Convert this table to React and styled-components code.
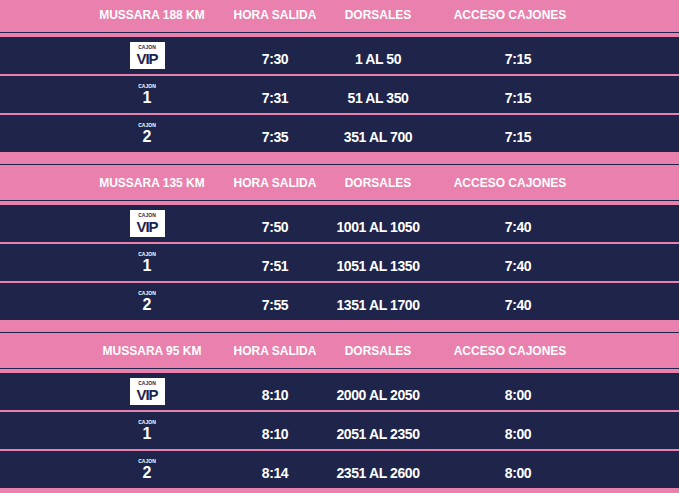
import React from "react";
import styled, { createGlobalStyle } from "styled-components";

const PINK = "#ea80ad";
const NAVY = "#1f244b";

const GlobalStyle = createGlobalStyle`
  html, body {
    margin: 0;
    padding: 0;
    background: ${PINK};
    overflow: hidden;
  }
  body {
    font-family: "Liberation Sans", Arial, sans-serif;
  }
`;

const Page = styled.div`
  margin-top: -16px;
  background: ${PINK};
`;

const Section = styled.section`
  padding-top: 12px;
`;

const Cols = styled.div`
  display: grid;
  grid-template-columns: 90px 124px 122px 84px 180px 1fr;
`;

const Header = styled(Cols)`
  height: 35px;
  align-items: center;
  border-top: 1px solid ${NAVY};
  border-bottom: 1px solid ${NAVY};
  margin-bottom: 4px;
`;

const HeadCell = styled.div`
  color: #fff;
  font-weight: 700;
  font-size: 12px;
  text-align: center;
  white-space: nowrap;
`;

const Rows = styled.div`
  display: flex;
  flex-direction: column;
  gap: 2px;
`;

const Row = styled(Cols)`
  height: 37px;
  background: ${NAVY};
  align-items: center;
`;

const Value = styled.div`
  color: #fff;
  font-weight: 700;
  font-size: 14px;
  letter-spacing: -0.4px;
  text-align: center;
  white-space: nowrap;
  padding-top: 6px;
  padding-left: ${(p) => p.$shift || 0}px;
`;

const CajonCell = styled.div`
  display: flex;
  justify-content: center;
  padding-right: 10px;
`;

const CajonBox = styled.div`
  display: flex;
  flex-direction: column;
  align-items: center;
  justify-content: center;
  gap: 1px;
  width: 35px;
  height: 27px;
  background: ${(p) => (p.$vip ? "#fff" : "transparent")};
  color: ${(p) => (p.$vip ? NAVY : "#fff")};
`;

const CajonLabel = styled.span`
  font-size: 5px;
  font-weight: 700;
  line-height: 5px;
`;

const CajonNum = styled.span`
  font-size: ${(p) => (p.$vip ? 15 : 16)}px;
  font-weight: 700;
  line-height: ${(p) => (p.$vip ? 15 : 16)}px;
  letter-spacing: ${(p) => (p.$vip ? "-1px" : "0")};
`;

const sections = [
  {
    name: "MUSSARA 188 KM",
    rows: [
      ["VIP", "7:30", "1 AL 50", "7:15"],
      ["1", "7:31", "51 AL 350", "7:15"],
      ["2", "7:35", "351 AL 700", "7:15"],
    ],
  },
  {
    name: "MUSSARA 135 KM",
    rows: [
      ["VIP", "7:50", "1001 AL 1050", "7:40"],
      ["1", "7:51", "1051 AL 1350", "7:40"],
      ["2", "7:55", "1351 AL 1700", "7:40"],
    ],
  },
  {
    name: "MUSSARA 95 KM",
    rows: [
      ["VIP", "8:10", "2000 AL 2050", "8:00"],
      ["1", "8:10", "2051 AL 2350", "8:00"],
      ["2", "8:14", "2351 AL 2600", "8:00"],
    ],
  },
];

function Cajon({ value }) {
  const vip = value === "VIP";
  return (
    <CajonCell>
      <CajonBox $vip={vip}>
        <CajonLabel>CAJON</CajonLabel>
        <CajonNum $vip={vip}>{value}</CajonNum>
      </CajonBox>
    </CajonCell>
  );
}

export default function App() {
  return (
    <Page>
      <GlobalStyle />
      {sections.map((s) => (
        <Section key={s.name}>
          <Header>
            <span />
            <HeadCell>{s.name}</HeadCell>
            <HeadCell>HORA SALIDA</HeadCell>
            <HeadCell>DORSALES</HeadCell>
            <HeadCell>ACCESO CAJONES</HeadCell>
          </Header>
          <Rows>
            {s.rows.map((r, i) => (
              <Row key={i}>
                <span />
                <Cajon value={r[0]} />
                <Value>{r[1]}</Value>
                <Value>{r[2]}</Value>
                <Value $shift={16}>{r[3]}</Value>
              </Row>
            ))}
          </Rows>
        </Section>
      ))}
    </Page>
  );
}
